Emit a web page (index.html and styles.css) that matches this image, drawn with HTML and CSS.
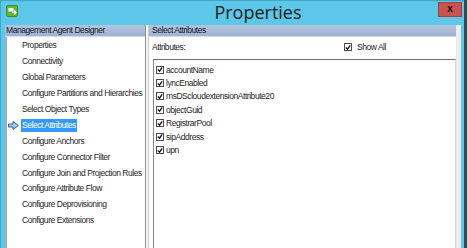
FILE: index.html
```html
<!DOCTYPE html>
<html>
<head>
  <meta charset="utf-8">
  <title>Properties</title>
  <link rel="stylesheet" href="styles.css">
</head>
<body>

  <div class="window">

    <div class="titlebar">
      <span class="app-icon">
        <svg width="12" height="12" viewBox="0 0 12 12">
          <rect x="0.5" y="0.5" width="11" height="11" rx="1.5" fill="#5fb83a" stroke="#3f8f22"/>
          <rect x="2.5" y="3" width="5" height="3.5" fill="#fff"/>
          <path d="M6 7.5 L10 7.5 L8 5.5 M10 7.5 L8 9.5" stroke="#fff" stroke-width="1.2" fill="none"/>
        </svg>
      </span>
      <span class="title">Properties</span>
      <span class="close">x</span>
    </div>

    <div class="client">

      <div class="pane nav">
        <div class="pane-head">Management Agent Designer</div>
        <ul class="nav-list">
          <li><i></i><span>Properties</span></li>
          <li><i></i><span>Connectivity</span></li>
          <li><i></i><span>Global Parameters</span></li>
          <li><i></i><span>Configure Partitions and Hierarchies</span></li>
          <li><i></i><span>Select Object Types</span></li>
          <li class="current">
            <i><svg width="11" height="9" viewBox="0 0 11 9">
              <path d="M0.5 3 L5 3 L5 0.5 L10.3 4.5 L5 8.5 L5 6 L0.5 6 Z" fill="#a9c8ec" stroke="#2f5f9a" stroke-width="1"/>
            </svg></i>
            <span>Select Attributes</span>
          </li>
          <li><i></i><span>Configure Anchors</span></li>
          <li><i></i><span>Configure Connector Filter</span></li>
          <li><i></i><span>Configure Join and Projection Rules</span></li>
          <li><i></i><span>Configure Attribute Flow</span></li>
          <li><i></i><span>Configure Deprovisioning</span></li>
          <li><i></i><span>Configure Extensions</span></li>
        </ul>
      </div>

      <div class="splitter"></div>

      <div class="pane detail">
        <div class="pane-head">Select Attributes</div>
        <div class="attr-bar">
          <span>Attributes:</span>
          <label class="show-all"><span class="box"><svg width="7" height="7" viewBox="0 0 7 7"><path d="M1 3.5 L3 5.5 L6 1" stroke="#111" stroke-width="1.5" fill="none"/></svg></span>Show All</label>
        </div>
        <ul class="attr-list">
          <li><span class="box"><svg width="7" height="7" viewBox="0 0 7 7"><path d="M1 3.5 L3 5.5 L6 1" stroke="#111" stroke-width="1.5" fill="none"/></svg></span>accountName</li>
          <li><span class="box"><svg width="7" height="7" viewBox="0 0 7 7"><path d="M1 3.5 L3 5.5 L6 1" stroke="#111" stroke-width="1.5" fill="none"/></svg></span>lyncEnabled</li>
          <li><span class="box"><svg width="7" height="7" viewBox="0 0 7 7"><path d="M1 3.5 L3 5.5 L6 1" stroke="#111" stroke-width="1.5" fill="none"/></svg></span>msDScloudextensionAttribute20</li>
          <li><span class="box"><svg width="7" height="7" viewBox="0 0 7 7"><path d="M1 3.5 L3 5.5 L6 1" stroke="#111" stroke-width="1.5" fill="none"/></svg></span>objectGuid</li>
          <li><span class="box"><svg width="7" height="7" viewBox="0 0 7 7"><path d="M1 3.5 L3 5.5 L6 1" stroke="#111" stroke-width="1.5" fill="none"/></svg></span>RegistrarPool</li>
          <li><span class="box"><svg width="7" height="7" viewBox="0 0 7 7"><path d="M1 3.5 L3 5.5 L6 1" stroke="#111" stroke-width="1.5" fill="none"/></svg></span>sipAddress</li>
          <li><span class="box"><svg width="7" height="7" viewBox="0 0 7 7"><path d="M1 3.5 L3 5.5 L6 1" stroke="#111" stroke-width="1.5" fill="none"/></svg></span>upn</li>
        </ul>
      </div>

    </div>
  </div>

</body>
</html>
```

FILE: styles.css
```css
html, body {
    margin: 0;
    padding: 0;
}

body {
    width: 467px;
    height: 248px;
    overflow: hidden;
    background: #3c4650;
    font-family: "Liberation Sans", Arial, sans-serif;
    font-size: 8.5px;
    letter-spacing: -0.45px;
    color: #1e1e1e;
}

ul {
    list-style: none;
    margin: 0;
    padding: 0;
}

.window {
    width: 463px;
    height: 260px;
    background: #5cc7e9;
    border-left: 1px solid #3fa6c8;
    border-top: 1px solid #3fa6c8;
    display: flex;
    flex-direction: column;
}

/* title bar */

.titlebar {
    height: 23px;
    display: flex;
    align-items: flex-start;
}

.app-icon {
    margin: 4px 0 0 5px;
    width: 12px;
    height: 12px;
}

.title {
    flex: 1;
    text-align: center;
    padding-left: 60px;
    font-family: "Open Sans", "Noto Sans", sans-serif;
    font-size: 18px;
    letter-spacing: 0;
    line-height: 22px;
    color: #1b1b1b;
}

.close {
    width: 24px;
    height: 15px;
    margin: 1px 2px 0 0;
    background: #c75250;
    border: 1px solid #a8403e;
    box-sizing: border-box;
    color: #111;
    font-family: "Liberation Sans", sans-serif;
    font-weight: bold;
    font-size: 10px;
    letter-spacing: 0;
    line-height: 12px;
    text-align: center;
}

/* client area */

.client {
    flex: 1;
    display: flex;
    margin: 1px 3px 0 4px;
    background: #f0f0f0;
}

.pane {
    display: flex;
    flex-direction: column;
    background: #fff;
    white-space: nowrap;
}

.pane-head {
    height: 11px;
    line-height: 11px;
    padding-left: 1px;
    background: linear-gradient(#b4c4dd, #9fb3d1);
    border-bottom: 1px solid #d6dde8;
    color: #14182a;
}

.nav {
    width: 140px;
    border-right: 1px solid #8f8f8f;
}

.nav-list {
    flex: 1;
    padding-top: 1px;
    border-left: 2px solid #a9a9a9;
}

.nav-list li {
    display: grid;
    grid-template-columns: 14px auto;
    align-items: center;
    height: 15.9px;
}

.nav-list li span {
    justify-self: start;
    padding: 0 1px;
    line-height: 13px;
}

.nav-list li i {
    display: flex;
    justify-content: flex-end;
    padding-right: 2px;
}

.nav-list li.current span {
    background: #3399ff;
    color: #fff;
}

.splitter {
    width: 2px;
    background: #f4f4f4;
}

.detail {
    flex: 1;
    border-right: 5px solid #ececec;
    border-left: 1px solid #cfcfcf;
}

.detail .pane-head {
    padding-left: 3px;
}

.attr-bar {
    display: flex;
    justify-content: space-between;
    align-items: center;
    height: 12px;
    margin: 4px 0 6px 3px;
    padding-right: 70px;
}

.show-all {
    display: flex;
    align-items: center;
    gap: 5px;
}

.box {
    width: 8px;
    height: 8px;
    box-sizing: border-box;
    border: 1px solid #4b4b4b;
    background: #fff;
    display: flex;
    align-items: center;
    justify-content: center;
}

.attr-list {
    flex: 1;
    margin: 0 0 0 4px;
    padding: 3px 0 0 2px;
    border: 1px solid #8a8a8a;
    border-top-color: #6e6e6e;
    border-right: 1px solid #d8d8d8;
}

.attr-list li {
    display: flex;
    align-items: center;
    gap: 2px;
    height: 13.4px;
}
```
